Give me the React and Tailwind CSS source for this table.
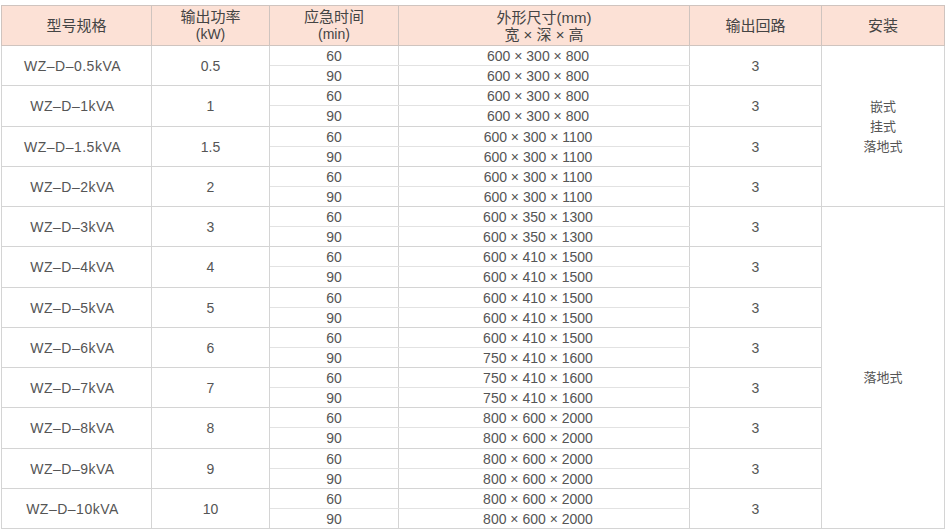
import React from 'react';

const groups = [
  { model: 'WZ–D–0.5kVA', kw: '0.5', sizes: ['600 × 300 × 800', '600 × 300 × 800'] },
  { model: 'WZ–D–1kVA', kw: '1', sizes: ['600 × 300 × 800', '600 × 300 × 800'] },
  { model: 'WZ–D–1.5kVA', kw: '1.5', sizes: ['600 × 300 × 1100', '600 × 300 × 1100'] },
  { model: 'WZ–D–2kVA', kw: '2', sizes: ['600 × 300 × 1100', '600 × 300 × 1100'] },
  { model: 'WZ–D–3kVA', kw: '3', sizes: ['600 × 350 × 1300', '600 × 350 × 1300'] },
  { model: 'WZ–D–4kVA', kw: '4', sizes: ['600 × 410 × 1500', '600 × 410 × 1500'] },
  { model: 'WZ–D–5kVA', kw: '5', sizes: ['600 × 410 × 1500', '600 × 410 × 1500'] },
  { model: 'WZ–D–6kVA', kw: '6', sizes: ['600 × 410 × 1500', '750 × 410 × 1600'] },
  { model: 'WZ–D–7kVA', kw: '7', sizes: ['750 × 410 × 1600', '750 × 410 × 1600'] },
  { model: 'WZ–D–8kVA', kw: '8', sizes: ['800 × 600 × 2000', '800 × 600 × 2000'] },
  { model: 'WZ–D–9kVA', kw: '9', sizes: ['800 × 600 × 2000', '800 × 600 × 2000'] },
  { model: 'WZ–D–10kVA', kw: '10', sizes: ['800 × 600 × 2000', '800 × 600 × 2000'] },
];

const th = 'border border-[#cfc4bf] font-normal text-[15px] leading-[17px] text-[#444] p-0';
const td = 'border border-[#d4d4d4] p-0 pt-[2px] text-center';
const sub = 'border-l border-r border-[#d4d4d4] p-0 pt-[2px] text-center leading-[17px]';

const App = () => {
  return (
    <div className="w-[945px] h-[529px] bg-white pt-[5px] pl-px" style={{ fontFamily: '"Liberation Sans", "Noto Sans CJK SC", sans-serif' }}>
      <table className="border-collapse table-fixed w-[943px] text-[14px] text-[#555]">
        <colgroup>
          <col className="w-[150px]" />
          <col className="w-[118px]" />
          <col className="w-[129px]" />
          <col className="w-[291px]" />
          <col className="w-[132px]" />
          <col className="w-[123px]" />
        </colgroup>
        <thead>
          <tr className="bg-[#fce1d6] h-[40px]">
            <th className={th}>型号规格</th>
            <th className={th}>输出功率<br /><span className="text-[14px]">(kW)</span></th>
            <th className={th}>应急时间<br /><span className="text-[14px]">(min)</span></th>
            <th className={th}>外形尺寸(mm)<br />宽 × 深 × 高</th>
            <th className={th}>输出回路</th>
            <th className={th}>安装</th>
          </tr>
        </thead>
        <tbody>
          {groups.map((g, i) => (
            <React.Fragment key={g.model}>
              <tr className="h-[20.125px]">
                <td rowSpan={2} className={`${td} tracking-[0.5px] pr-[8px]`}>{g.model}</td>
                <td rowSpan={2} className={td}>{g.kw}</td>
                <td className={`${sub} border-t border-t-[#d4d4d4] border-b border-b-[#e2e2e2]`}>60</td>
                <td className={`${sub} pr-[12px] border-t border-t-[#d4d4d4] border-b border-b-[#e2e2e2]`}>{g.sizes[0]}</td>
                <td rowSpan={2} className={td}>3</td>
                {i === 0 && (
                  <td rowSpan={8} className={`${td} text-[13px] leading-[20px]`}>
                    嵌式<br />挂式<br />落地式
                  </td>
                )}
                {i === 4 && (
                  <td rowSpan={16} className={`${td} text-[13px] pt-[20px]`}>落地式</td>
                )}
              </tr>
              <tr className="h-[20.125px]">
                <td className={`${sub} border-b border-b-[#d4d4d4]`}>90</td>
                <td className={`${sub} pr-[12px] border-b border-b-[#d4d4d4]`}>{g.sizes[1]}</td>
              </tr>
            </React.Fragment>
          ))}
        </tbody>
      </table>
    </div>
  );
};

export default App;
